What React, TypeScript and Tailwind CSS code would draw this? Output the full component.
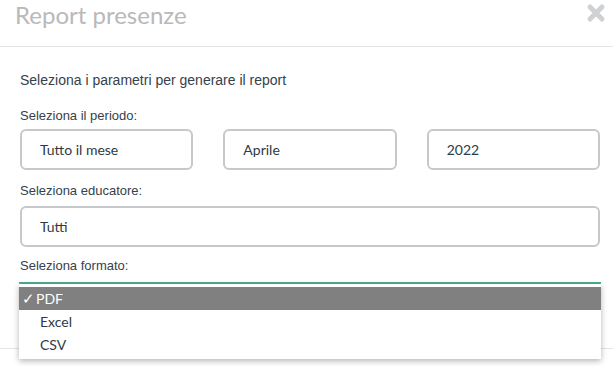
import * as React from 'react';

const Field = ({ value, className = '' }: { value: string; className?: string }) => (
  <div
    className={`h-[41px] flex items-center px-[18px] border-2 border-[#c5c9cc] rounded-[6px] bg-white text-[14px] text-[#2f3a44] font-['Lato',sans-serif] ${className}`}
  >
    {value}
  </div>
);

const Label = ({ children }: { children: React.ReactNode }) => (
  <div className="text-[13px] leading-[16px] text-[#36414b] font-['Liberation_Sans',Arial,sans-serif]">
    {children}
  </div>
);

export default function App() {
  const formats = ['PDF', 'Excel', 'CSV'];
  return (
    <div className="w-[613px] h-[366px] bg-white overflow-hidden relative">
      <div className="h-[47px] flex items-start justify-between border-b border-[#e5e5e5] pl-[15px] pr-[7px]">
        <h1 className="mt-[0px] text-[24px] leading-[30px] text-[#b9b9b9] font-['Lato',sans-serif]">
          Report presenze
        </h1>
        <svg width="20" height="20" viewBox="0 0 20 20" className="mt-[3px]">
          <path d="M4 4 L16 16 M16 4 L4 16" stroke="#cfd2d5" strokeWidth="5" strokeLinecap="round" />
        </svg>
      </div>

      <div className="pl-[20px] pr-[13px] pt-[25px] flex flex-col">
        <p className="text-[14px] leading-[16px] text-[#36414b] font-['Liberation_Sans',Arial,sans-serif]">
          Seleziona i parametri per generare il report
        </p>
        <div className="mt-[20px]">
          <Label>Seleziona il periodo:</Label>
        </div>
        <div className="mt-[5px] flex gap-[30px]">
          <Field value="Tutto il mese" className="flex-1" />
          <Field value="Aprile" className="flex-1" />
          <Field value="2022" className="flex-1" />
        </div>
        <div className="mt-[13px]">
          <Label>Seleziona educatore:</Label>
        </div>
        <div className="mt-[7px]">
          <Field value="Tutti" />
        </div>
        <div className="mt-[11px]">
          <Label>Seleziona formato:</Label>
        </div>
      </div>

      <div className="absolute left-0 right-0 top-[348px] border-t border-[#e5e5e5]" />

      <div className="absolute left-[19px] w-[582px] top-[282px] border-t-2 border-[#4caf8a]" />
      <ul className="absolute left-[19px] w-[582px] top-[284px] h-[75px] bg-white shadow-[0_2px_6px_rgba(0,0,0,0.3)] pt-[3px] font-['Lato',sans-serif] text-[14px]">
        {formats.map((f, i) => (
          <li
            key={f}
            className={`h-[23px] flex items-center ${
              i === 0 ? 'bg-[#808080] text-white pl-[3px]' : 'text-[#2f3a44] pl-[21px]'
            }`}
          >
            {i === 0 && <span className="w-[14px] text-[15px]">✓</span>}
            {f}
          </li>
        ))}
      </ul>
    </div>
  );
}
